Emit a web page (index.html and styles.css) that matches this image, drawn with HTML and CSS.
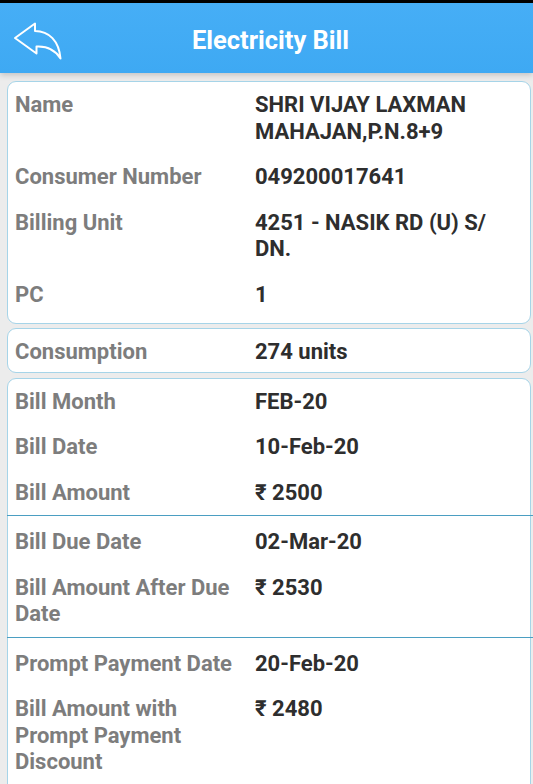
FILE: index.html
```html
<!DOCTYPE html>
<html>
<head>
<meta charset="utf-8">
<link rel="stylesheet" href="styles.css">
</head>
<body>
<div class="statusbar"></div>
<header class="appbar">
  <button class="back" aria-label="Back">
    <svg width="50" height="42" viewBox="0 0 50 42">
      <path d="M3 18 L23 3.5 L23 11 C37 11 47 21 48.5 38.5 C43 29.5 34 26 24.5 26.5 L24.5 33.5 Z" fill="none" stroke="#fff" stroke-width="2" stroke-linejoin="round"/>
    </svg>
  </button>
  <h1 class="title">Electricity Bill</h1>
</header>
<main class="content">
  <section class="card">
    <div class="row"><div class="label">Name</div><div class="value">SHRI VIJAY LAXMAN MAHAJAN,P.N.8+9</div></div>
    <div class="row"><div class="label">Consumer Number</div><div class="value">049200017641</div></div>
    <div class="row"><div class="label">Billing Unit</div><div class="value">4251 - NASIK RD (U) S/<wbr>DN.</div></div>
    <div class="row"><div class="label">PC</div><div class="value">1</div></div>
  </section>
  <section class="card card-single">
    <div class="row"><div class="label">Consumption</div><div class="value">274 units</div></div>
  </section>
  <section class="card card-bill">
    <div class="group">
      <div class="row"><div class="label">Bill Month</div><div class="value">FEB-20</div></div>
      <div class="row"><div class="label">Bill Date</div><div class="value">10-Feb-20</div></div>
      <div class="row"><div class="label">Bill Amount</div><div class="value">₹ 2500</div></div>
    </div>
    <div class="group sep">
      <div class="row"><div class="label">Bill Due Date</div><div class="value">02-Mar-20</div></div>
      <div class="row"><div class="label">Bill Amount After Due Date</div><div class="value">₹ 2530</div></div>
    </div>
    <div class="group sep">
      <div class="row"><div class="label">Prompt Payment Date</div><div class="value">20-Feb-20</div></div>
      <div class="row"><div class="label">Bill Amount with Prompt Payment Discount</div><div class="value">₹ 2480</div></div>
    </div>
  </section>
</main>
</body>
</html>
```

FILE: styles.css
```css
* { box-sizing: border-box; }
html, body {
  margin: 0;
  padding: 0;
  height: 784px;
  overflow: hidden;
}
body {
  background: #ececec;
  font-family: Roboto, "Liberation Sans", sans-serif;
}
.statusbar {
  height: 3px;
  background: #000;
}
.appbar {
  height: 70px;
  background: linear-gradient(#46aef6, #3ea9f3);
  display: flex;
  align-items: center;
  position: relative;
  box-shadow: 0 2px 6px rgba(0,0,0,0.18);
}
.back {
  position: absolute;
  left: 12px;
  top: 17px;
  background: none;
  border: 0;
  padding: 0;
  width: 50px;
  height: 42px;
}
.back svg { display: block; }
.title {
  flex: 1;
  margin: 0;
  padding: 3px 0 0 8px;
  text-align: center;
  color: #fff;
  font-size: 25.5px;
  font-weight: 700;
}
.content {
  padding: 8px 2px 0 7px;
  display: flex;
  flex-direction: column;
  gap: 5px;
}
.card {
  background: #fff;
  border: 1px solid #a6d4e8;
  border-radius: 9px;
  padding: 0 0 6px 0;
}
.card-single {
  padding: 0;
  margin-top: -1px;
}
.card-single .row { padding: 10px 0 6px 7px; }
.card-bill {
  padding: 0;
  border-bottom-left-radius: 0;
  border-bottom-right-radius: 0;
  min-height: 420px;
}
.group { padding: 0; }
.group.sep {
  border-top: 1px solid #4b9ec2;
  padding-top: 3px;
  margin-left: -1px;
  margin-right: -3px;
  padding-left: 1px;
  padding-right: 3px;
}
.row {
  display: grid;
  grid-template-columns: 240px 1fr;
  padding: 10px 0 9px 7px;
  font-size: 22px;
  line-height: 26.5px;
  font-weight: 700;
}
.label {
  color: #7d7d7d;
  padding-right: 8px;
}
.value {
  color: #2e2e2e;
  max-width: 255px;
}
```
